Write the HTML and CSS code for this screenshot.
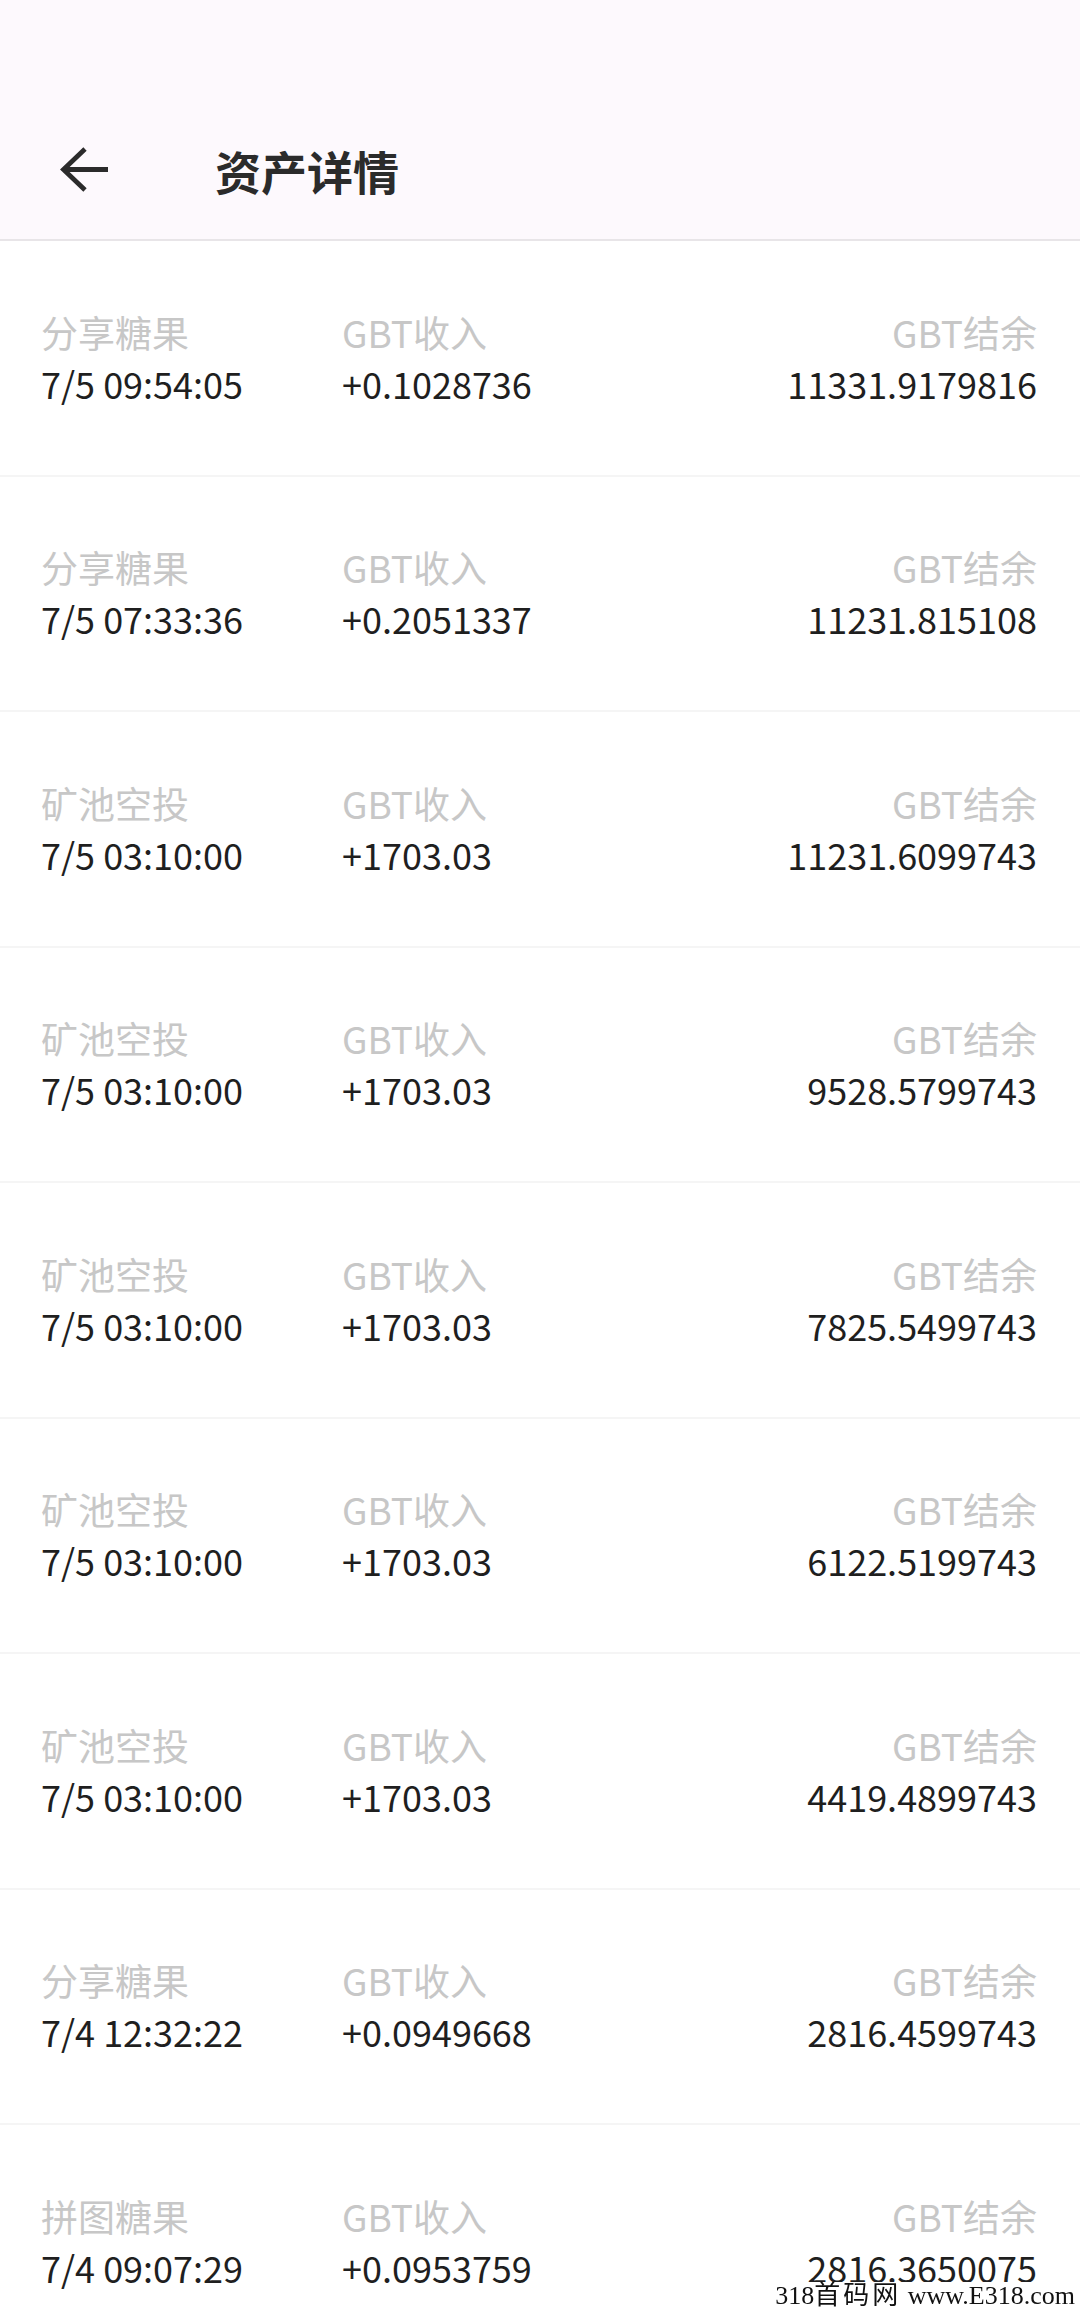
FILE: index.html
```html
<!DOCTYPE html>
<html lang="zh-CN">
<head>
  <meta charset="UTF-8">
  <title>资产详情</title>
  <link rel="stylesheet" href="styles.css">
</head>
<body>
  <div class="app">
    <header class="topbar">
      <div class="statusbar"></div>
      <div class="navbar">
        <button class="back" type="button" aria-label="返回">
          <svg width="56" height="56" viewBox="0 0 56 56">
            <path d="M29 7 L7.5 27.5 L29 48 M7.5 27.5 H52" fill="none" stroke="#2b2b2b" stroke-width="4.8"/>
          </svg>
        </button>
        <h1 class="title">资产详情</h1>
      </div>
    </header>

    <ul class="records">
      <li class="record">
        <div class="cell"><span class="label">分享糖果</span><span class="value">7/5 09:54:05</span></div>
        <div class="cell"><span class="label">GBT收入</span><span class="value">+0.1028736</span></div>
        <div class="cell right"><span class="label">GBT结余</span><span class="value">11331.9179816</span></div>
      </li>
      <li class="record">
        <div class="cell"><span class="label">分享糖果</span><span class="value">7/5 07:33:36</span></div>
        <div class="cell"><span class="label">GBT收入</span><span class="value">+0.2051337</span></div>
        <div class="cell right"><span class="label">GBT结余</span><span class="value">11231.815108</span></div>
      </li>
      <li class="record">
        <div class="cell"><span class="label">矿池空投</span><span class="value">7/5 03:10:00</span></div>
        <div class="cell"><span class="label">GBT收入</span><span class="value">+1703.03</span></div>
        <div class="cell right"><span class="label">GBT结余</span><span class="value">11231.6099743</span></div>
      </li>
      <li class="record">
        <div class="cell"><span class="label">矿池空投</span><span class="value">7/5 03:10:00</span></div>
        <div class="cell"><span class="label">GBT收入</span><span class="value">+1703.03</span></div>
        <div class="cell right"><span class="label">GBT结余</span><span class="value">9528.5799743</span></div>
      </li>
      <li class="record">
        <div class="cell"><span class="label">矿池空投</span><span class="value">7/5 03:10:00</span></div>
        <div class="cell"><span class="label">GBT收入</span><span class="value">+1703.03</span></div>
        <div class="cell right"><span class="label">GBT结余</span><span class="value">7825.5499743</span></div>
      </li>
      <li class="record">
        <div class="cell"><span class="label">矿池空投</span><span class="value">7/5 03:10:00</span></div>
        <div class="cell"><span class="label">GBT收入</span><span class="value">+1703.03</span></div>
        <div class="cell right"><span class="label">GBT结余</span><span class="value">6122.5199743</span></div>
      </li>
      <li class="record">
        <div class="cell"><span class="label">矿池空投</span><span class="value">7/5 03:10:00</span></div>
        <div class="cell"><span class="label">GBT收入</span><span class="value">+1703.03</span></div>
        <div class="cell right"><span class="label">GBT结余</span><span class="value">4419.4899743</span></div>
      </li>
      <li class="record">
        <div class="cell"><span class="label">分享糖果</span><span class="value">7/4 12:32:22</span></div>
        <div class="cell"><span class="label">GBT收入</span><span class="value">+0.0949668</span></div>
        <div class="cell right"><span class="label">GBT结余</span><span class="value">2816.4599743</span></div>
      </li>
      <li class="record">
        <div class="cell"><span class="label">拼图糖果</span><span class="value">7/4 09:07:29</span></div>
        <div class="cell"><span class="label">GBT收入</span><span class="value">+0.0953759</span></div>
        <div class="cell right"><span class="label">GBT结余</span><span class="value">2816.3650075</span></div>
      </li>
    </ul>

    <div class="watermark">318<span class="wm-cjk">首码网</span> www.E318.com</div>
  </div>
</body>
</html>
```

FILE: styles.css
```css
html, body {
  margin: 0;
  padding: 0;
  background: #fff;
}

body {
  font-family: "Noto Sans CJK SC", "Noto Sans", sans-serif;
  height: 2310px;
  overflow: hidden;
}

.app {
  width: 1080px;
}

.topbar {
  background-color: #fdf9fd;
  border-bottom: 2px solid #e8e5e8;
}

.statusbar {
  height: 101px;
}

.navbar {
  height: 138px;
  display: flex;
  align-items: center;
}

.back {
  width: 56px;
  height: 56px;
  margin-left: 56px;
  padding: 0;
  border: none;
  background: none;
  display: flex;
}

.title {
  margin: 0 0 0 103px;
  font-size: 46px;
  font-weight: 700;
  color: #2b2b2b;
  line-height: 1;
}

.records {
  list-style: none;
  margin: 0;
  padding: 0;
}

.record {
  height: 233.5px;
  border-bottom: 2px solid #f5f5f5;
  display: grid;
  grid-template-columns: 301px 1fr auto;
  align-items: center;
  padding: 0 43px 0 41px;
}

.cell {
  display: flex;
  flex-direction: column;
  font-size: 37px;
  line-height: 51px;
}

.cell.right {
  align-items: flex-end;
}

.label {
  color: #c7c7c7;
}

.value {
  color: #1f1f1f;
  font-size: 36px;
}

.watermark {
  position: fixed;
  right: 5px;
  bottom: 0;
  font-family: "Liberation Serif", "Noto Sans CJK SC", serif;
  font-size: 26px;
  line-height: 28px;
  color: #111;
  background: #fff;
  padding-left: 2px;
}

.wm-cjk {
  font-size: 26px;
  letter-spacing: 3px;
}
```
